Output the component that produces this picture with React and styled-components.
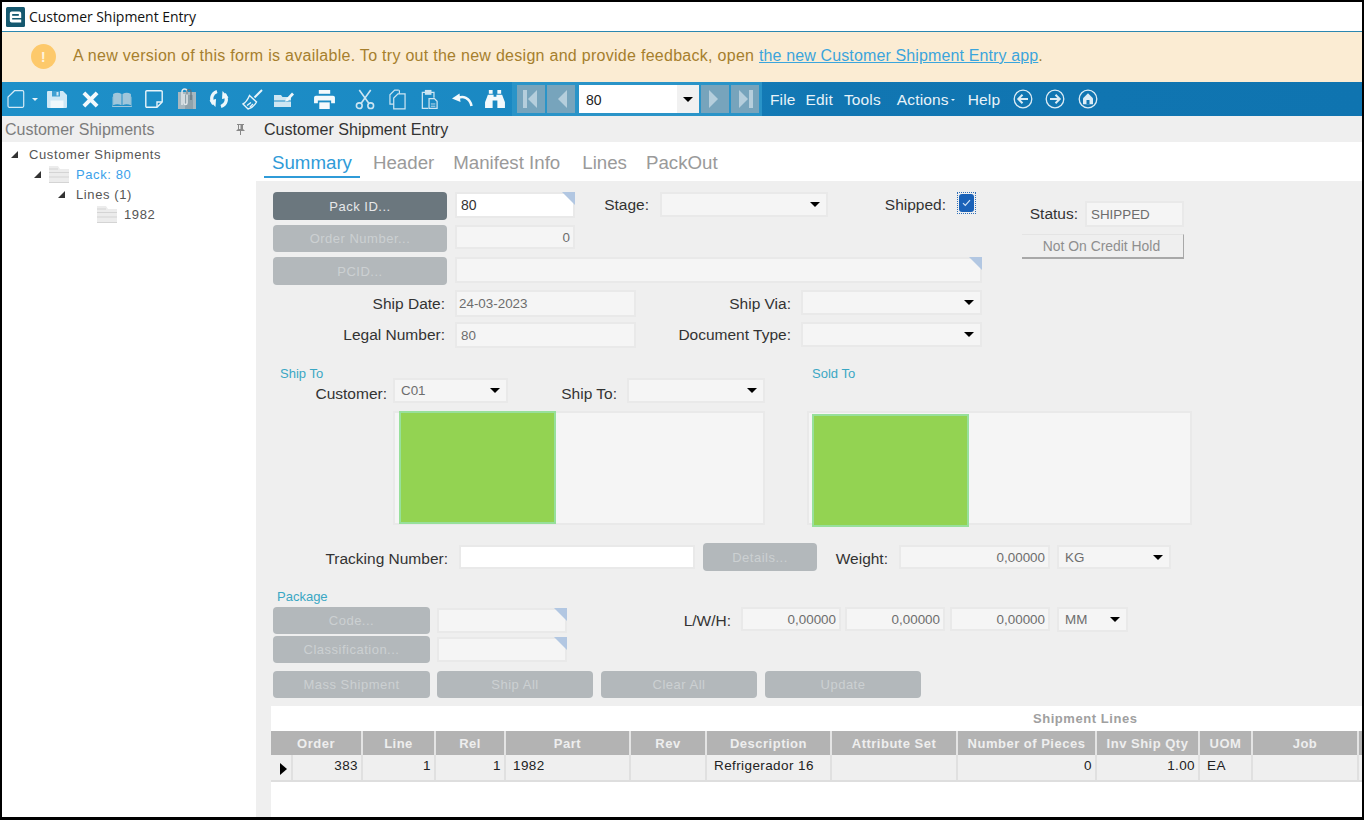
import styled, { createGlobalStyle } from "styled-components";

const GlobalStyle = createGlobalStyle`
  html, body {
    margin: 0;
    padding: 0;
    background: #fff;
  }
`;

const Shell = styled.div`
  width: 1364px;
  height: 820px;
  box-sizing: border-box;
  border: 2px solid #000;
  border-bottom-width: 3px;
  display: flex;
  flex-direction: column;
  overflow: hidden;
  background: #fff;
  font-family: "Liberation Sans", Arial, sans-serif;
`;

const TitleBar = styled.div`
  height: 29px;
  flex: none;
  display: flex;
  align-items: center;
  gap: 4px;
  padding-left: 4px;
  border-bottom: 1px solid #2b87b0;
  font-family: "Open Sans", "Noto Sans", sans-serif;
  font-size: 14px;
  letter-spacing: -0.05px;
  color: #111;
`;

const Banner = styled.div`
  height: 50px;
  flex: none;
  box-sizing: border-box;
  display: flex;
  align-items: center;
  padding: 0 0 2px 29px;
  gap: 17px;
  background: #fbecd3;
  color: #a67f2d;
  font-size: 16px;
  letter-spacing: 0.28px;
  a {
    color: #3ba5dc;
    letter-spacing: 0.13px;
  }
`;

const Alert = styled.span`
  width: 25px;
  height: 25px;
  border-radius: 50%;
  background: #fdc96b;
  color: #fff3dc;
  font-size: 15px;
  font-weight: bold;
  display: flex;
  align-items: center;
  justify-content: center;
`;

const Toolbar = styled.div`
  height: 34px;
  flex: none;
  display: flex;
  align-items: center;
  background: linear-gradient(90deg, #1e90c9 0%, #1a88c2 40%, #1176b2 60%, #0f74b0 100%);
  color: #eef6fb;
`;

const Tool = styled.span`
  width: ${({ $w }) => $w}px;
  height: 34px;
  flex: none;
  display: flex;
  align-items: center;
  justify-content: center;
`;

const Caret = styled.i`
  display: block;
  flex: none;
  border-left: ${({ $s = 4 }) => $s}px solid transparent;
  border-right: ${({ $s = 4 }) => $s}px solid transparent;
  border-top: ${({ $s = 4 }) => $s}px solid ${({ $c = "#000" }) => $c};
`;

const NavGroup = styled.div`
  width: 250px;
  height: 34px;
  flex: none;
  display: flex;
  align-items: center;
  padding: 0 1px 0 5px;
  box-sizing: border-box;
  gap: 2px;
  background: #2a94c8;
`;

const NavButton = styled.span`
  width: 28px;
  height: 28px;
  flex: none;
  display: flex;
  align-items: center;
  justify-content: center;
  background: #77a4bc;
`;

const NavCombo = styled.div`
  width: 120px;
  height: 28px;
  flex: none;
  margin-left: 2px;
  display: flex;
  align-items: center;
  background: #fff;
  color: #222;
  font-size: 14px;
  padding-left: 7px;
  box-sizing: border-box;
  span {
    flex: 1;
    padding-top: 1px;
  }
  b {
    width: 22px;
    height: 100%;
    background: #f1f1f1;
    display: flex;
    align-items: center;
    justify-content: center;
  }
`;

const Menu = styled.span`
  margin-left: ${({ $ml }) => $ml}px;
  padding-top: 2px;
  font-size: 15.5px;
  letter-spacing: 0.15px;
  display: flex;
  align-items: center;
  gap: 2px;
  color: #e8f3f9;
`;

const RoundIcon = styled.span`
  margin-left: ${({ $ml }) => $ml}px;
  display: flex;
`;

const Body = styled.div`
  flex: 1;
  min-height: 0;
  display: flex;
`;

const Sidebar = styled.aside`
  width: 254px;
  flex: none;
  background: #fff;
`;

const SideHead = styled.div`
  height: 26px;
  box-sizing: border-box;
  display: flex;
  align-items: center;
  justify-content: space-between;
  padding: 1px 11px 0 3px;
  background: #efefef;
  color: #7d7d7d;
  font-size: 16px;
`;

const Tree = styled.div`
  padding-top: 3px;
`;

const TreeRow = styled.div`
  height: 20px;
  display: flex;
  align-items: center;
  padding-left: ${({ $indent }) => $indent}px;
  padding-bottom: 1px;
  box-sizing: border-box;
  font-size: 13px;
  letter-spacing: 0.6px;
  color: ${({ $active }) => ($active ? "#3ba1ea" : "#555")};
`;

const Twisty = styled.i`
  display: block;
  width: 0;
  height: 0;
  flex: none;
  margin-right: ${({ $mr }) => $mr}px;
  border-bottom: 7px solid #333;
  border-left: 7px solid transparent;
`;

const FolderIcon = styled.svg`
  flex: none;
  margin-right: 7px;
`;

const Main = styled.main`
  flex: 1;
  min-width: 0;
  display: flex;
  flex-direction: column;
  background: #efefef;
`;

const MainHead = styled.div`
  height: 26px;
  flex: none;
  display: flex;
  align-items: center;
  padding-left: 8px;
  color: #333;
  font-size: 16.1px;
`;

const Tabs = styled.div`
  height: 39px;
  flex: none;
  display: flex;
  padding-left: 8px;
  background: #fff;
`;

const Tab = styled.div`
  padding: 10px 8px 0;
  margin-right: ${({ $mr = 0 }) => $mr}px;
  box-sizing: border-box;
  height: 36px;
  font-size: 18.7px;
  color: ${({ $active }) => ($active ? "#2f9bd8" : "#9a9a9a")};
  border-bottom: 2px solid ${({ $active }) => ($active ? "#2f9bd8" : "transparent")};
`;

const Form = styled.div`
  flex: 1;
  min-height: 0;
  display: flex;
  flex-direction: column;
  padding-top: 11px;
  padding-left: 17px;
`;

const TopArea = styled.div`
  display: flex;
  flex: none;
`;

const TopLeft = styled.div`
  width: 709px;
  flex: none;
`;

const StatusBlock = styled.div`
  margin-left: 40px;
  padding-top: 9px;
  width: 162px;
`;

const Row = styled.div`
  display: flex;
  align-items: flex-start;
  height: ${({ $h = 28 }) => $h}px;
  margin-top: ${({ $mt = 0 }) => $mt}px;
  margin-left: ${({ $ml = 0 }) => $ml}px;
`;

const Label = styled.label`
  width: ${({ $w }) => $w}px;
  margin-right: ${({ $gap = 10 }) => $gap}px;
  flex: none;
  align-self: center;
  text-align: right;
  font-size: 15.5px;
  color: #333;
  transform: translateY(${({ $dy = 0 }) => $dy}px);
`;

const ActionButton = styled.button`
  width: ${({ $w }) => $w}px;
  height: ${({ $h = 27 }) => $h}px;
  flex: none;
  margin-right: ${({ $gap = 8 }) => $gap}px;
  padding: 0;
  border: 0;
  border-radius: 4px;
  background: ${({ $primary }) => ($primary ? "#6b777e" : "#b3b8bb")};
  color: ${({ $primary }) => ($primary ? "#e6e8e9" : "#ccd0d2")};
  font-family: inherit;
  font-size: 13px;
  letter-spacing: 0.5px;
`;

const Field = styled.div`
  position: relative;
  width: ${({ $w }) => $w}px;
  height: ${({ $h = 25 }) => $h}px;
  flex: none;
  margin-top: ${({ $mt = 0 }) => $mt}px;
  margin-right: ${({ $gap = 0 }) => $gap}px;
  box-sizing: border-box;
  display: flex;
  align-items: center;
  justify-content: ${({ $right }) => ($right ? "flex-end" : "space-between")};
  padding: 0 ${({ $right }) => ($right ? "3px" : "6px")} 0 ${({ $pl = 4 }) => $pl}px;
  background: ${({ $white }) => ($white ? "#fff" : "#f5f5f5")};
  border: 2px solid #e9e9e9;
  font-size: ${({ $white }) => ($white ? "14px" : "13.4px")};
  color: ${({ $white }) => ($white ? "#333" : "#6d6d6d")};
  &::after {
    content: "";
    display: ${({ $flag }) => ($flag ? "block" : "none")};
    position: absolute;
    top: -2px;
    right: -2px;
    border-top: 13px solid #b2c7e2;
    border-left: 13px solid transparent;
  }
`;

const CheckWrap = styled.div`
  width: 19px;
  height: 22px;
  flex: none;
  box-sizing: border-box;
  outline: 1px dotted #2f6fb8;
  outline-offset: -1px;
  display: flex;
  align-items: center;
  justify-content: center;
`;

const Check = styled.span`
  width: 15px;
  height: 18px;
  border-radius: 3px;
  background: #1a62b8;
  display: flex;
  align-items: center;
  justify-content: center;
`;

const CreditButton = styled.div`
  height: 25px;
  margin-top: 7px;
  box-sizing: border-box;
  padding-right: 2px;
  background: #efefef;
  border-right: 1px solid #a8a8a8;
  border-bottom: 2px solid #a8a8a8;
  border-top: 1px solid #e4e4e4;
  color: #8e8e8e;
  font-size: 13.9px;
  display: flex;
  align-items: center;
  justify-content: center;
`;

const AddressArea = styled.div`
  display: flex;
  flex: none;
  margin-top: 19px;
`;

const AddressCol = styled.div`
  width: ${({ $w }) => $w}px;
  flex: none;
`;

const Caption = styled.div`
  height: ${({ $h = 11 }) => $h}px;
  margin-top: ${({ $mt = 0 }) => $mt}px;
  padding-left: ${({ $pl }) => $pl}px;
  font-size: 13px;
  line-height: 14px;
  color: #3aa7c4;
`;

const AddressBox = styled.div`
  width: ${({ $w }) => $w}px;
  height: 114px;
  box-sizing: border-box;
  margin-top: ${({ $mt }) => $mt}px;
  margin-left: ${({ $ml }) => $ml}px;
  background: #f5f5f5;
  border: 2px solid #e9e9e9;
`;

const AddressBlock = styled.div`
  width: 157px;
  height: 113px;
  box-sizing: border-box;
  margin-left: ${({ $x }) => $x}px;
  margin-top: ${({ $y }) => $y}px;
  background: #93d352;
  border: 2px solid #97e09b;
`;

const Panel = styled.section`
  flex: 1;
  min-height: 0;
  margin: 8px 0 0 -2px;
  background: #fff;
`;

const PanelTitle = styled.div`
  height: 25px;
  padding-left: 762px;
  box-sizing: border-box;
  font-size: 13px;
  font-weight: bold;
  letter-spacing: 0.55px;
  line-height: 25px;
  color: #a0a0a0;
`;

const GridRow = styled.div`
  display: flex;
  height: ${({ $h }) => $h}px;
  box-sizing: border-box;
  background: ${({ $head }) => ($head ? "#b3b3b3" : "#efefef")};
  border-bottom: ${({ $head }) => ($head ? "0" : "2px solid #dedede")};
`;

const HeadCell = styled.div`
  width: ${({ $w }) => $w}px;
  flex: none;
  box-sizing: border-box;
  border-right: 2px solid #e4e4e4;
  color: #eeeeee;
  font-size: 13px;
  font-weight: bold;
  letter-spacing: 0.5px;
  line-height: 25px;
  text-align: center;
  white-space: nowrap;
  overflow: hidden;
`;

const Cell = styled.div`
  width: ${({ $w }) => $w}px;
  flex: none;
  box-sizing: border-box;
  border-right: 2px solid #e0e0e0;
  padding: 0 3px 0 7px;
  color: #222;
  font-size: 13.5px;
  letter-spacing: 0.4px;
  line-height: 22px;
  text-align: ${({ $right }) => ($right ? "right" : "left")};
  white-space: nowrap;
  overflow: hidden;
`;

const Selector = styled(Cell)`
  display: flex;
  align-items: center;
  justify-content: center;
  &::before {
    content: "";
    border-left: 7px solid #000;
    border-top: 6px solid transparent;
    border-bottom: 6px solid transparent;
    margin-top: 3px;
  }
`;

const columns = [
  { name: "Order", w: 92 },
  { name: "Line", w: 73 },
  { name: "Rel", w: 70 },
  { name: "Part", w: 125 },
  { name: "Rev", w: 76 },
  { name: "Description", w: 125 },
  { name: "Attribute Set", w: 126 },
  { name: "Number of Pieces", w: 139 },
  { name: "Inv Ship Qty", w: 103 },
  { name: "UOM", w: 53 },
  { name: "Job", w: 106 },
  { name: "", w: 10 },
];

const row = [
  { v: "383", w: 70, right: true },
  { v: "1", w: 73, right: true },
  { v: "1", w: 70, right: true },
  { v: "1982", w: 125 },
  { v: "", w: 76 },
  { v: "Refrigerador 16", w: 125 },
  { v: "", w: 126 },
  { v: "0", w: 139, right: true },
  { v: "1.00", w: 103, right: true },
  { v: "EA", w: 53 },
  { v: "", w: 106 },
  { v: "", w: 10 },
];

const ico = "#d5eaf6";

function Logo() {
  return (
    <svg width="19" height="20" viewBox="0 0 20 20" preserveAspectRatio="none">
      <rect width="20" height="20" rx="1.5" fill="#15586f" />
      <path d="M4 6.5A2 2 0 0 1 6 4.5h8a2 2 0 0 1 2 2v4.500H6.500v1.500H16v3H6a2 2 0 0 1-2-2Z" fill="#fff" />
      <rect x="6.500" y="7" width="7" height="1.800" fill="#15586f" />
    </svg>
  );
}

function NewIcon() {
  return (
    <svg width="18" height="18" viewBox="0 0 18 18" fill="none" stroke={ico} strokeWidth="1.2">
      <path d="M7.500 .7h8a1.200 1.200 0 0 1 1.200 1.200v14.200a1.200 1.200 0 0 1-1.200 1.200H2.200a1.200 1.200 0 0 1-1.200-1.200V7Z" />
    </svg>
  );
}

function SaveIcon() {
  return (
    <svg width="20" height="17" viewBox="0 0 20 17" fill="#cfe8f6">
      <path d="M0 1a1 1 0 0 1 1-1h15l4 4v12a1 1 0 0 1-1 1H1a1 1 0 0 1-1-1Z" />
      <rect x="5" y="0" width="8" height="5.500" fill="#3f9fd2" />
      <rect x="9.500" y="1" width="2" height="3.500" fill="#cfe8f6" />
      <rect x="3.500" y="9.500" width="13" height="7.500" fill="#f1f8fc" />
    </svg>
  );
}

function CloseIcon() {
  return (
    <svg width="17" height="17" viewBox="0 0 18 18" stroke="#f3f9fc" strokeWidth="4.2">
      <path d="M2 2l14 14M16 2L2 16" />
    </svg>
  );
}

function BookIcon() {
  return (
    <svg width="20" height="15" viewBox="0 0 21 16" fill="#a0c6da">
      <path d="M1 2c3-1.500 6-1.500 9 0v12c-3-1.200-6-1.200-9 0Z" />
      <path d="M11 2c3-1.500 6-1.500 9 0v12c-3-1.200-6-1.200-9 0Z" />
      <path d="M0 5v11h21V5h-.5v10h-20V5Z" />
    </svg>
  );
}

function NoteIcon() {
  return (
    <svg width="18" height="18" viewBox="0 0 18 18" fill="none" stroke="#e8f4fa" strokeWidth="1.400">
      <path d="M1.800.8h14.400a1 1 0 0 1 1 1V12l-5.200 5.200H1.800a1 1 0 0 1-1-1V1.800a1 1 0 0 1 1-1Z" />
      <path d="M17 12h-5v5" />
    </svg>
  );
}

function AttachIcon() {
  return (
    <svg width="20" height="22" viewBox="0 0 20 22" fill="none">
      <rect x="1" y="4" width="18" height="17" fill="#a8b8c0" />
      <rect x="8" y="7" width="8" height="14" fill="#8fa2ab" />
      <path d="M5 17V3.500a2.500 2.500 0 0 1 5 0V15a1.500 1.500 0 0 1-3 0V6" stroke="#e2e7ea" strokeWidth="1.500" />
      <path d="M10 6.500V3.500a2 2 0 0 1 4 0V12" stroke="#5f7079" strokeWidth="1.200" />
    </svg>
  );
}

function RefreshIcon() {
  return (
    <svg width="20" height="22" viewBox="0 0 20 22" fill="none" stroke="#eef7fb" strokeWidth="3.200">
      <path d="M8 3.500C3 5 0.800 11 4.500 16" />
      <path d="M12 18.500C17 17 19.200 11 15.500 6" />
      <path d="M0.500 12.500l6 6.500 .5-8Z" fill="#eef7fb" stroke="none" />
      <path d="M19.500 9.500l-6-6.500-.5 8Z" fill="#eef7fb" stroke="none" />
    </svg>
  );
}

function BroomIcon() {
  return (
    <svg width="21" height="21" viewBox="0 0 21 21" fill="none" stroke="#e8f4fa" strokeWidth="1.400">
      <path d="M12.500 8.500L20 1" strokeWidth="2" />
      <path d="M7.500 6.500l7 6.500c-1.500 3-5.500 6-8.500 7L1 15c3-1.500 5-5 6.500-8.500Z" />
      <path d="M5 16.500l4-3M8 18l3-3" />
    </svg>
  );
}

function FolderEditIcon() {
  return (
    <svg width="22" height="16" viewBox="0 0 22 16">
      <path d="M0 4h7l1.500 2H17v3.500H0Z" fill="#cfe6f2" />
      <path d="M0 10.500h17V16H0Z" fill="#cfe6f2" />
      <path d="M12 8l6-6.500 2 2-6 6.500-3 .5Z" fill="#f0f7fb" />
    </svg>
  );
}

function PrinterIcon() {
  return (
    <svg width="21" height="19" viewBox="0 0 22 20" fill="#f3f9fc">
      <path d="M5 0h12v4H5Z" />
      <path d="M2 6h18a2 2 0 0 1 2 2v6h-4v-3H4v3H0V8a2 2 0 0 1 2-2Z" />
      <path d="M5.500 13h11v7h-11Z" />
    </svg>
  );
}

function ScissorsIcon() {
  return (
    <svg width="20" height="21" viewBox="0 0 21 22" fill="none" stroke="#cde5f2" strokeWidth="1.700">
      <circle cx="4.500" cy="17.500" r="3" />
      <circle cx="16.500" cy="17.500" r="3" />
      <path d="M6.500 15L16.500 1M14.500 15L4.500 1" />
    </svg>
  );
}

function CopyIcon() {
  return (
    <svg width="17" height="21" viewBox="0 0 18 22" fill="none" stroke="#cde5f2" strokeWidth="1.300">
      <path d="M10 1H6L1 6v10h4" />
      <path d="M10 1a1 1 0 0 1 1 1v3" />
      <path d="M9.500 5H17v16H5V9.500Z" />
    </svg>
  );
}

function PasteIcon() {
  return (
    <svg width="17" height="21" viewBox="0 0 19 22" fill="none" stroke="#cde5f2" strokeWidth="1.400">
      <path d="M5 3H1.500v18H8" />
      <path d="M11 3h3.500v6" />
      <rect x="5" y="1" width="6" height="4" fill="#cde5f2" />
      <path d="M9 10h6l3 3v8H9Z" />
      <path d="M11 16h5M11 18.500h5" strokeWidth="1" />
    </svg>
  );
}

function UndoIcon() {
  return (
    <svg width="21" height="15" viewBox="0 0 21 15" fill="none" stroke="#f3f9fc" strokeWidth="2.600">
      <path d="M19.500 14C18 6 11 2.500 4 7" />
      <path d="M0 6.500l7.500-5 1 8.500Z" fill="#f3f9fc" stroke="none" />
    </svg>
  );
}

function BinocularsIcon() {
  return (
    <svg width="20" height="18" viewBox="0 0 21 19" fill="#f3f9fc">
      <path d="M4 0h4v4H4ZM13 0h4v4h-4Z" />
      <path d="M3 5h6v2h3V5h6l3 8v6h-8v-8H8v8H0v-6Z" />
    </svg>
  );
}

function NavGlyph({ dir, bar }) {
  const flip = dir === "right" ? "translate(16 0) scale(-1 1)" : undefined;
  return (
    <svg width="16" height="20" viewBox="0 0 16 20" fill="#b5cedc">
      <g transform={flip}>
        {bar && <rect x="0" y="1" width="4" height="18" />}
        <path d="M14 1v18L5 10Z" />
      </g>
    </svg>
  );
}

function CircleArrow({ flip }) {
  return (
    <svg width="20" height="20" viewBox="0 0 20 20" fill="none" stroke="#dcecf5" strokeWidth="1.300">
      <circle cx="10" cy="10" r="8.800" />
      <g transform={flip ? "translate(20 0) scale(-1 1)" : undefined} strokeWidth="2">
        <path d="M15 10H6M9.500 5.800L5.300 10l4.200 4.200" />
      </g>
    </svg>
  );
}

function HomeIcon() {
  return (
    <svg width="20" height="20" viewBox="0 0 20 20">
      <circle cx="10" cy="10" r="8.800" fill="none" stroke="#dcecf5" strokeWidth="1.300" />
      <path d="M10 4.200l5 5v6H5v-6Z" fill="#dcecf5" />
      <rect x="8.500" y="11" width="3" height="4.200" fill="#1176b2" />
    </svg>
  );
}

function PinIcon() {
  return (
    <svg width="9" height="11" viewBox="0 0 9 11" fill="#888">
      <path d="M1 0h7v1H7v4l2 2H5v4H4V7H0l2-2V1H1Zm2 1v4h1.500V1Z" fillRule="evenodd" />
    </svg>
  );
}

function Folder() {
  return (
    <FolderIcon width="20" height="17" viewBox="0 0 20 17">
      <path d="M0 0h9l2 3h9v14H0Z" fill="#ececec" />
      <path d="M0 3h9M0 6.500h20M0 11h20M0 16.500h20" stroke="#d4d4d4" strokeWidth="1" fill="none" />
    </FolderIcon>
  );
}

function Check16() {
  return (
    <svg width="9" height="8" viewBox="0 0 9 8" fill="none" stroke="#cfe2f6" strokeWidth="1.200">
      <path d="M1 4.200l2.300 2.300L8 1.200" />
    </svg>
  );
}

function SelectBox({ w, h, mt, value }) {
  return (
    <Field $w={w} $h={h} $mt={mt} $pl={6}>
      <span>{value}</span>
      <Caret $s={5} />
    </Field>
  );
}

export default function App() {
  return (
    <>
      <GlobalStyle />
      <Shell>
        <TitleBar>
          <Logo />
          Customer Shipment Entry
        </TitleBar>
        <Banner>
          <Alert>!</Alert>
          <span>
            A new version of this form is available. To try out the new design and provide feedback, open{" "}
            <a href="#new">the new Customer Shipment Entry app</a>.
          </span>
        </Banner>
        <Toolbar>
          <Tool $w={28}><NewIcon /></Tool>
          <Tool $w={10}><Caret $c="#e8f3f9" $s={3} /></Tool>
          <Tool $w={34}><SaveIcon /></Tool>
          <Tool $w={32}><CloseIcon /></Tool>
          <Tool $w={32}><BookIcon /></Tool>
          <Tool $w={32}><NoteIcon /></Tool>
          <Tool $w={34}><AttachIcon /></Tool>
          <Tool $w={30}><RefreshIcon /></Tool>
          <Tool $w={36}><BroomIcon /></Tool>
          <Tool $w={30}><FolderEditIcon /></Tool>
          <Tool $w={48}><PrinterIcon /></Tool>
          <Tool $w={34}><ScissorsIcon /></Tool>
          <Tool $w={30}><CopyIcon /></Tool>
          <Tool $w={34}><PasteIcon /></Tool>
          <Tool $w={32}><UndoIcon /></Tool>
          <Tool $w={34}><BinocularsIcon /></Tool>
          <NavGroup>
            <NavButton><NavGlyph bar /></NavButton>
            <NavButton><NavGlyph /></NavButton>
            <NavCombo>
              <span>80</span>
              <b><Caret $s={5} /></b>
            </NavCombo>
            <NavButton><NavGlyph dir="right" /></NavButton>
            <NavButton><NavGlyph dir="right" bar /></NavButton>
          </NavGroup>
          <Menu $ml={8}>File</Menu>
          <Menu $ml={10}>Edit</Menu>
          <Menu $ml={11}>Tools</Menu>
          <Menu $ml={16}>Actions<Caret $c="#e8f3f9" $s={2.5} /></Menu>
          <Menu $ml={13}>Help</Menu>
          <RoundIcon $ml={13}><CircleArrow /></RoundIcon>
          <RoundIcon $ml={12}><CircleArrow flip /></RoundIcon>
          <RoundIcon $ml={13}><HomeIcon /></RoundIcon>
        </Toolbar>
        <Body>
          <Sidebar>
            <SideHead>
              Customer Shipments
              <PinIcon />
            </SideHead>
            <Tree>
              <TreeRow $indent={9}><Twisty $mr={11} />Customer Shipments</TreeRow>
              <TreeRow $indent={32} $active><Twisty $mr={8} /><Folder />Pack: 80</TreeRow>
              <TreeRow $indent={56}><Twisty $mr={11} />Lines (1)</TreeRow>
              <TreeRow $indent={95}><Folder />1982</TreeRow>
            </Tree>
          </Sidebar>
          <Main>
            <MainHead>Customer Shipment Entry</MainHead>
            <Tabs>
              <Tab $active $mr={5}>Summary</Tab>
              <Tab $mr={3}>Header</Tab>
              <Tab $mr={6}>Manifest Info</Tab>
              <Tab $mr={3}>Lines</Tab>
              <Tab>PackOut</Tab>
            </Tabs>
            <Form>
              <TopArea>
                <TopLeft>
                  <Row>
                    <ActionButton $w={174} $h={28} $primary>Pack ID...</ActionButton>
                    <Field $w={120} $h={26} $white $flag>80</Field>
                    <Label $w={74} $gap={11} $dy={-1}>Stage:</Label>
                    <SelectBox w={168} />
                    <Label $w={118} $gap={11} $dy={-1}>Shipped:</Label>
                    <CheckWrap><Check><Check16 /></Check></CheckWrap>
                  </Row>
                  <Row $mt={5} $h={27}>
                    <ActionButton $w={174} disabled>Order Number...</ActionButton>
                    <Field $w={120} $h={24} $right>0</Field>
                  </Row>
                  <Row $mt={5}>
                    <ActionButton $w={174} $h={28} disabled>PCID...</ActionButton>
                    <Field $w={527} $h={26} $flag />
                  </Row>
                  <Row $mt={5} $h={27}>
                    <Label $w={172}>Ship Date:</Label>
                    <Field $w={181} $h={27} $pl={2}>24-03-2023</Field>
                    <Label $w={155}>Ship Via:</Label>
                    <SelectBox w={181} />
                  </Row>
                  <Row $mt={5} $h={26}>
                    <Label $w={172}>Legal Number:</Label>
                    <Field $w={181} $h={26}>80</Field>
                    <Label $w={155}>Document Type:</Label>
                    <SelectBox w={181} />
                  </Row>
                </TopLeft>
                <StatusBlock>
                  <Row $h={26}>
                    <Label $w={56} $gap={7}>Status:</Label>
                    <Field $w={99} $h={26}>SHIPPED</Field>
                  </Row>
                  <CreditButton>Not On Credit Hold</CreditButton>
                </StatusBlock>
              </TopArea>
              <AddressArea>
                <AddressCol $w={534}>
                  <Caption $pl={7}>Ship To</Caption>
                  <Row $h={25}>
                    <Label $w={114} $gap={6} $dy={3}>Customer:</Label>
                    <SelectBox w={115} value="C01" />
                    <Label $w={109} $dy={3}>Ship To:</Label>
                    <SelectBox w={138} />
                  </Row>
                  <AddressBox $w={372} $ml={120} $mt={8}>
                    <AddressBlock $x={4} $y={-2} />
                  </AddressBox>
                </AddressCol>
                <AddressCol $w={385}>
                  <Caption $pl={5}>Sold To</Caption>
                  <AddressBox $w={385} $ml={0} $mt={33}>
                    <AddressBlock $x={3} $y={1} />
                  </AddressBox>
                </AddressCol>
              </AddressArea>
              <Row $mt={18}>
                <Label $w={175} $gap={11} $dy={2}>Tracking Number:</Label>
                <Field $w={236} $h={24} $mt={2} $white $gap={8} />
                <ActionButton $w={114} $h={28} $gap={0} disabled>Details...</ActionButton>
                <Label $w={71} $gap={11} $dy={2}>Weight:</Label>
                <Field $w={151} $h={24} $mt={2} $right $gap={7}>0,00000</Field>
                <SelectBox w={114} h={24} mt={2} value="KG" />
              </Row>
              <Caption $pl={4} $h={14} $mt={19}>Package</Caption>
              <Row $mt={3} $h={27}>
                <ActionButton $w={157} $gap={7} disabled>Code...</ActionButton>
                <Field $w={130} $mt={1} $flag />
                <Label $w={164}>L/W/H:</Label>
                <Field $w={100} $h={24} $right $gap={4}>0,00000</Field>
                <Field $w={100} $h={24} $right $gap={5}>0,00000</Field>
                <Field $w={100} $h={24} $right $gap={7}>0,00000</Field>
                <SelectBox w={71} h={25} value="MM" />
              </Row>
              <Row $mt={2} $h={27}>
                <ActionButton $w={157} $gap={7} disabled>Classification...</ActionButton>
                <Field $w={130} $mt={1} $flag />
              </Row>
              <Row $mt={8} $h={27}>
                <ActionButton $w={157} $gap={7} disabled>Mass Shipment</ActionButton>
                <ActionButton $w={156} disabled>Ship All</ActionButton>
                <ActionButton $w={156} disabled>Clear All</ActionButton>
                <ActionButton $w={156} disabled>Update</ActionButton>
              </Row>
              <Panel>
                <PanelTitle>Shipment Lines</PanelTitle>
                <GridRow $head $h={24}>
                  {columns.map((c) => (
                    <HeadCell key={c.name} $w={c.w}>{c.name}</HeadCell>
                  ))}
                </GridRow>
                <GridRow $h={27}>
                  <Selector $w={22} />
                  {row.map((c, i) => (
                    <Cell key={i} $w={c.w} $right={c.right}>{c.v}</Cell>
                  ))}
                </GridRow>
              </Panel>
            </Form>
          </Main>
        </Body>
      </Shell>
    </>
  );
}
